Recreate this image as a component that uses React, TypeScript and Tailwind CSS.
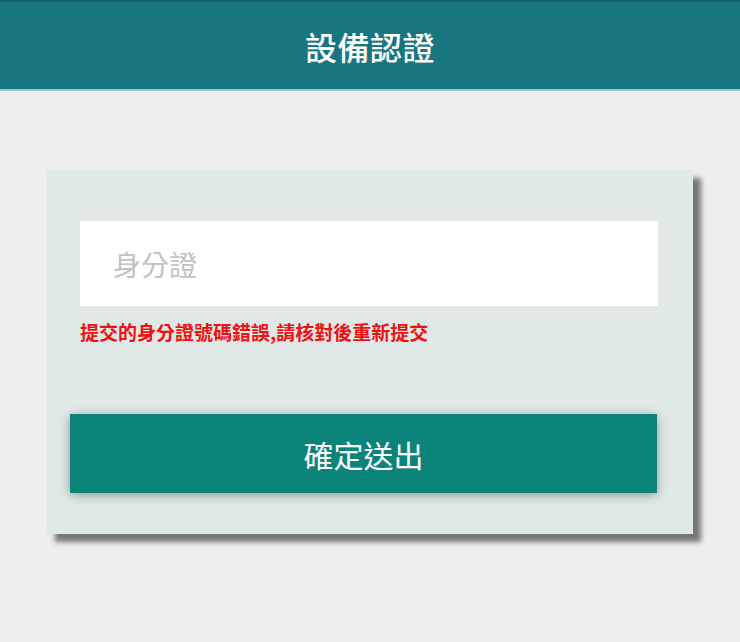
export default function App() {
  return (
    <div
      className="min-h-[642px] w-full bg-[#eeeeee]"
      style={{ fontFamily: '"Noto Sans CJK TC", "Noto Sans", sans-serif' }}
    >
      <header className="flex h-[91px] items-center justify-center border-t-2 border-t-[#12606a] border-b-2 border-b-[#9cc3c8] bg-[#187680]">
        <h1 className="text-[32px] font-medium leading-none tracking-[0.5px] text-white">設備認證</h1>
      </header>

      <div className="ml-[47px] mt-[79px] flex h-[364px] w-[646px] flex-col bg-[#e1e8e8] pt-[51px] shadow-[8px_8px_5px_rgba(0,0,0,0.5)]">
        <div className="ml-[33px] w-[578px]">
          <input
            type="text"
            placeholder="身分證"
            className="block h-[85px] w-full bg-white px-[33px] text-[28px] text-[#333] outline-none placeholder:text-[#c2c2c2]"
          />
          <p className="mt-[14px] text-[19px] font-bold leading-[24px] text-[#ee1111]">
            提交的身分證號碼錯誤,請核對後重新提交
          </p>
        </div>
        <button className="ml-[23px] mt-[70px] flex h-[79px] w-[587px] items-center justify-center bg-[#0b8379] text-[30px] leading-none text-white shadow-[0_2px_10px_rgba(0,0,0,0.35)]">
          確定送出
        </button>
      </div>
    </div>
  );
}
